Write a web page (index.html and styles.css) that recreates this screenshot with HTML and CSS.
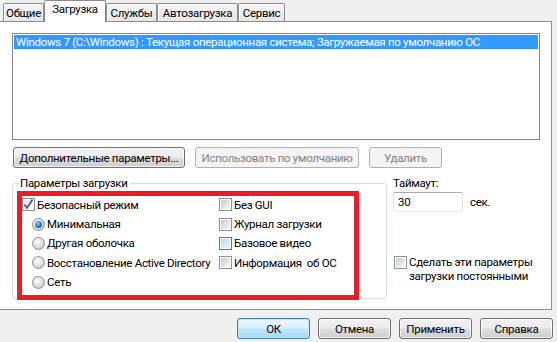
FILE: index.html
```html
<!DOCTYPE html>
<html>
<head>
<meta charset="utf-8">
<link rel="stylesheet" href="styles.css">
</head>
<body>
<div class="tabs">
  <div class="tab w1">Общие</div>
  <div class="tab active w2">Загрузка</div>
  <div class="tab w3">Службы</div>
  <div class="tab w4">Автозагрузка</div>
  <div class="tab w5">Сервис</div>
</div>
<div class="panel">
  <div class="list">
    <div class="list-row">Windows 7 (C:\Windows) : Текущая операционная система; Загружаемая по умолчанию ОС</div>
  </div>
  <div class="btn-row">
    <button class="btn b-adv">Дополнительные параметры...</button>
    <button class="btn disabled b-def">Использовать по умолчанию</button>
    <button class="btn disabled b-del">Удалить</button>
  </div>
  <div class="lower">
    <fieldset class="group">
      <legend class="legend">Параметры загрузки</legend>
      <div class="cols">
        <div class="col">
          <div class="opt"><span class="cb checked"><svg viewBox="0 0 11 11" width="11" height="11"><path d="M1.5 5.5 L4 9 L9.5 0.5" fill="none" stroke="#4a5b8c" stroke-width="1.8"/></svg></span>Безопасный режим</div>
          <div class="opt sub"><span class="rb on"></span>Минимальная</div>
          <div class="opt sub"><span class="rb"></span>Другая оболочка</div>
          <div class="opt sub"><span class="rb"></span>Восстановление Active Directory</div>
          <div class="opt sub"><span class="rb"></span>Сеть</div>
        </div>
        <div class="col right">
          <div class="opt"><span class="cb"></span>Без GUI</div>
          <div class="opt"><span class="cb"></span>Журнал загрузки</div>
          <div class="opt"><span class="cb hover"></span>Базовое видео</div>
          <div class="opt"><span class="cb"></span>Информация&nbsp; об ОС</div>
        </div>
      </div>
    </fieldset>
    <div class="side">
      <div class="t-label">Таймаут:</div>
      <div class="t-row"><div class="input">30</div><span class="sec">сек.</span></div>
      <div class="perm"><span class="cb"></span><span class="perm-text">Сделать эти параметры<br>загрузки постоянными</span></div>
    </div>
  </div>
  <div class="annot"></div>
</div>
<div class="footer">
  <button class="btn fbtn default">ОК</button>
  <button class="btn fbtn">Отмена</button>
  <button class="btn fbtn">Применить</button>
  <button class="btn fbtn">Справка</button>
</div>
</body>
</html>
```

FILE: styles.css
```css
* { box-sizing: border-box; }
html, body { margin: 0; }
body {
  width: 557px;
  height: 342px;
  overflow: hidden;
  background: #f0f0f0;
  font-family: Roboto, "Noto Sans", sans-serif;
  font-size: 11.5px;
  letter-spacing: -0.3px;
  color: #000;
}

.tabs {
  display: flex;
  align-items: flex-end;
  height: 21px;
  padding-left: 3px;
  position: relative;
  z-index: 2;
}
.tab {
  height: 18px;
  border: 1px solid #898c95;
  border-bottom: none;
  background: linear-gradient(#f5f5f5, #e6e6e6);
  box-shadow: inset 1px 1px 0 #fff;
  text-align: center;
  line-height: 19px;
  border-radius: 2px 2px 0 0;
}
.tab.active {
  height: 22px;
  margin-bottom: -1px;
  background: #fff;
  box-shadow: none;
  line-height: 17px;
}
.w1 { width: 41px; }
.w2 { width: 62px; }
.w3 { width: 51px; }
.w4 { width: 81px; }
.w5 { width: 47px; }

.panel {
  position: relative;
  width: 552px;
  height: 289px;
  background: #fff;
  border: 1px solid #898c95;
  border-left: none;
  padding: 11px 0 0 12px;
}

.list {
  width: 528px;
  height: 107px;
  border: 1px solid #828790;
  padding: 1px;
}
.list-row {
  height: 14px;
  line-height: 14px;
  background: #3399ff;
  color: #fff;
  padding-left: 2px;
  white-space: nowrap;
}

.btn-row {
  display: flex;
  gap: 10px;
  margin-top: 7px;
  padding-left: 1px;
}
.btn {
  height: 21px;
  padding: 0;
  font: inherit;
  letter-spacing: inherit;
  color: #000;
  border: 1px solid #707070;
  border-radius: 3px;
  background: linear-gradient(#f2f2f2 0%, #ebebeb 48%, #dddddd 52%, #cfcfcf 100%);
  box-shadow: inset 0 0 0 1px rgba(255,255,255,0.7);
}
.btn.disabled {
  border-color: #adb2b5;
  background: #f4f4f4;
  color: #838383;
  box-shadow: none;
}
.b-adv { width: 172px; }
.b-def { width: 164px; }
.b-del { width: 73px; }

.lower {
  display: flex;
  gap: 6px;
  margin-top: 7px;
}
.group {
  margin: 0;
  width: 375px;
  height: 124px;
  border: 1px solid #d5dfe5;
  border-radius: 3px;
  padding: 4px 0 0 9px;
  min-width: 0;
}
.legend {
  padding: 0 2px;
  margin-left: -4px;
  line-height: 16px;
}
.cols {
  display: flex;
}
.col { width: 197px; }
.col.right { width: 150px; }
.opt {
  display: flex;
  align-items: center;
  height: 19.4px;
  white-space: nowrap;
}
.opt.sub { padding-left: 10px; }
.cb {
  flex: none;
  width: 13px;
  height: 13px;
  border: 1px solid #8e8f8f;
  padding: 1px;
  background: linear-gradient(135deg, #c8ccd2, #f7f7f7) content-box, #fff;
  margin-right: 2px;
  position: relative;
}
.cb.checked {
  background: linear-gradient(135deg, #e4e6ea, #fbfbfb) content-box, #fff;
}
.cb.checked svg {
  position: absolute;
  left: 0;
  top: 0;
}
.cb.hover {
  border-color: #3c7fb1;
  background: linear-gradient(135deg, #b1dcf7, #e8f6fe) content-box, #fff;
}
.rb {
  flex: none;
  width: 13px;
  height: 13px;
  border-radius: 50%;
  border: 1px solid #8e8f8f;
  background: radial-gradient(circle at 40% 35%, #fdfdfd 0%, #e2e2e2 45%, #b9b9b9 100%);
  margin-right: 2px;
  position: relative;
}
.rb.on::after {
  content: "";
  position: absolute;
  left: 2px;
  top: 2px;
  width: 7px;
  height: 7px;
  border-radius: 50%;
  background: radial-gradient(circle at 40% 35%, #7ad0ff 0%, #2a86d8 45%, #0f3f7a 100%);
}

.side {
  display: flex;
  flex-direction: column;
}
.t-label {
  line-height: 16px;
}
.t-row {
  display: flex;
  align-items: center;
  margin-top: 1px;
}
.input {
  width: 70px;
  height: 20px;
  border: 1px solid #abadb3;
  border-color: #abadb3 #dbdfe6 #e3e9ef #e2e3ea;
  border-radius: 2px;
  padding-left: 4px;
  line-height: 18px;
}
.sec { margin-left: 7px; }
.perm {
  display: flex;
  align-items: flex-start;
  margin-top: 43px;
  margin-left: 1px;
}
.perm .cb { margin-top: 1px; }
.perm-text { line-height: 14px; }

.annot {
  position: absolute;
  left: 17px;
  top: 169px;
  width: 342px;
  height: 109px;
  border: 5px solid #ed1c24;
  pointer-events: none;
}

.footer {
  display: flex;
  justify-content: flex-end;
  gap: 8px;
  margin-top: 8px;
  padding-right: 4px;
}
.fbtn { width: 73px; }
.btn.default {
  border-color: #3c7fb1;
  background: linear-gradient(#eaf6fd 0%, #d9f0fc 48%, #bee6fd 52%, #a7d9f5 100%);
  box-shadow: inset 0 0 0 1px #c6e5f8;
}
```
